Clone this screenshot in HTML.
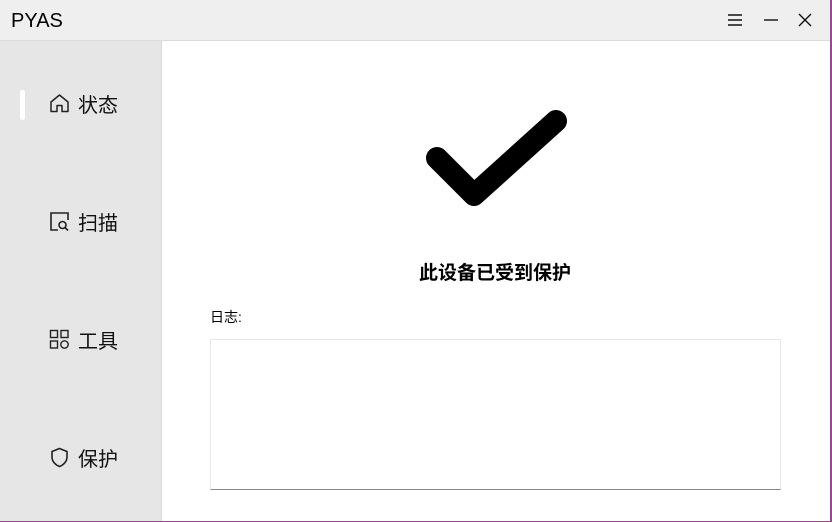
<!DOCTYPE html>
<html><head><meta charset="utf-8"><style>
*{margin:0;padding:0;box-sizing:border-box}
body{width:832px;height:522px;overflow:hidden;background:#fff;font-family:"Liberation Sans","Noto Sans CJK SC",sans-serif;position:relative}
.title{position:absolute;left:0;top:0;width:832px;height:41px;background:#efefef;border-bottom:1px solid #dcdcdc}
.title .t{position:absolute;left:11px;top:10px;font-size:20px;color:#000}
.side{position:absolute;left:0;top:41px;width:162px;height:481px;background:#e6e6e6;border-right:1px solid #dadada}
.item{position:absolute;left:49px;font-size:20px;color:#111;display:flex;align-items:center}
.item svg{margin-right:8px}
.ind{position:absolute;left:20px;top:49px;width:5px;height:30px;background:#fff;border-radius:3px}
.h{position:absolute;left:0;width:990px;top:258px;text-align:center;font-size:19px;font-weight:bold}
.log{position:absolute;left:210px;top:307px;font-size:14px}
.box{position:absolute;left:210px;top:339px;width:571px;height:151px;border:1px solid #e8e8e8;border-bottom:1px solid #888}
.edge{position:absolute;right:0;top:0;width:2px;height:522px;background:#8e4e8e}
.edgeb{position:absolute;left:0;bottom:0;width:832px;height:1px;background:#8e4e8e}
</style></head><body>
<div class="title"><span class="t">PYAS</span>
<svg style="position:absolute;left:727px;top:13px" width="16" height="14"><path d="M1 2H15M1 7H15M1 12H15" stroke="#111" stroke-width="1.4"/></svg>
<svg style="position:absolute;left:763px;top:13px" width="16" height="14"><path d="M1 7H15" stroke="#111" stroke-width="1.4"/></svg>
<svg style="position:absolute;left:797px;top:12px" width="16" height="16"><path d="M2 2L14 14M14 2L2 14" stroke="#111" stroke-width="1.4"/></svg>
</div>
<div class="side">
<div class="ind"></div>
<div class="item" style="top:48px"><svg width="21" height="21" viewBox="0 0 21 21"><path d="M2 9L10.5 2L19 9V18.5H13V12.5H8V18.5H2Z" fill="none" stroke="#222" stroke-width="1.5" stroke-linejoin="round"/></svg>状态</div>
<div class="item" style="top:166px"><svg width="21" height="21" viewBox="0 0 21 21"><path d="M9 19H2V2H19V9" fill="none" stroke="#222" stroke-width="1.6"/><circle cx="13.5" cy="14" r="3.5" fill="none" stroke="#222" stroke-width="1.6"/><path d="M16 16.5L19 19.5" stroke="#222" stroke-width="1.6"/></svg>扫描</div>
<div class="item" style="top:284px"><svg width="21" height="21" viewBox="0 0 21 21"><rect x="1.5" y="1.5" width="7" height="7" fill="none" stroke="#222" stroke-width="1.4"/><rect x="12" y="1.5" width="7" height="7" fill="none" stroke="#222" stroke-width="1.4"/><rect x="1.5" y="12" width="7" height="7" fill="none" stroke="#222" stroke-width="1.4"/><circle cx="15.5" cy="15.5" r="3.7" fill="none" stroke="#222" stroke-width="1.4"/></svg>工具</div>
<div class="item" style="top:402px"><svg width="21" height="21" viewBox="0 0 21 21"><path d="M10.5 1.5L18 4.5V10C18 14.5 14.5 18 10.5 19.5C6.5 18 3 14.5 3 10V4.5Z" fill="none" stroke="#222" stroke-width="1.6" stroke-linejoin="round"/></svg>保护</div>
</div>
<svg style="position:absolute;left:420px;top:105px" width="160" height="110"><polyline points="17,53 54,90 136,16" fill="none" stroke="#000" stroke-width="22" stroke-linecap="round" stroke-linejoin="round"/></svg>
<div class="h">此设备已受到保护</div>
<div class="log">日志:</div>
<div class="box"></div>
<div class="edge"></div><div class="edgeb"></div>
</body></html>
